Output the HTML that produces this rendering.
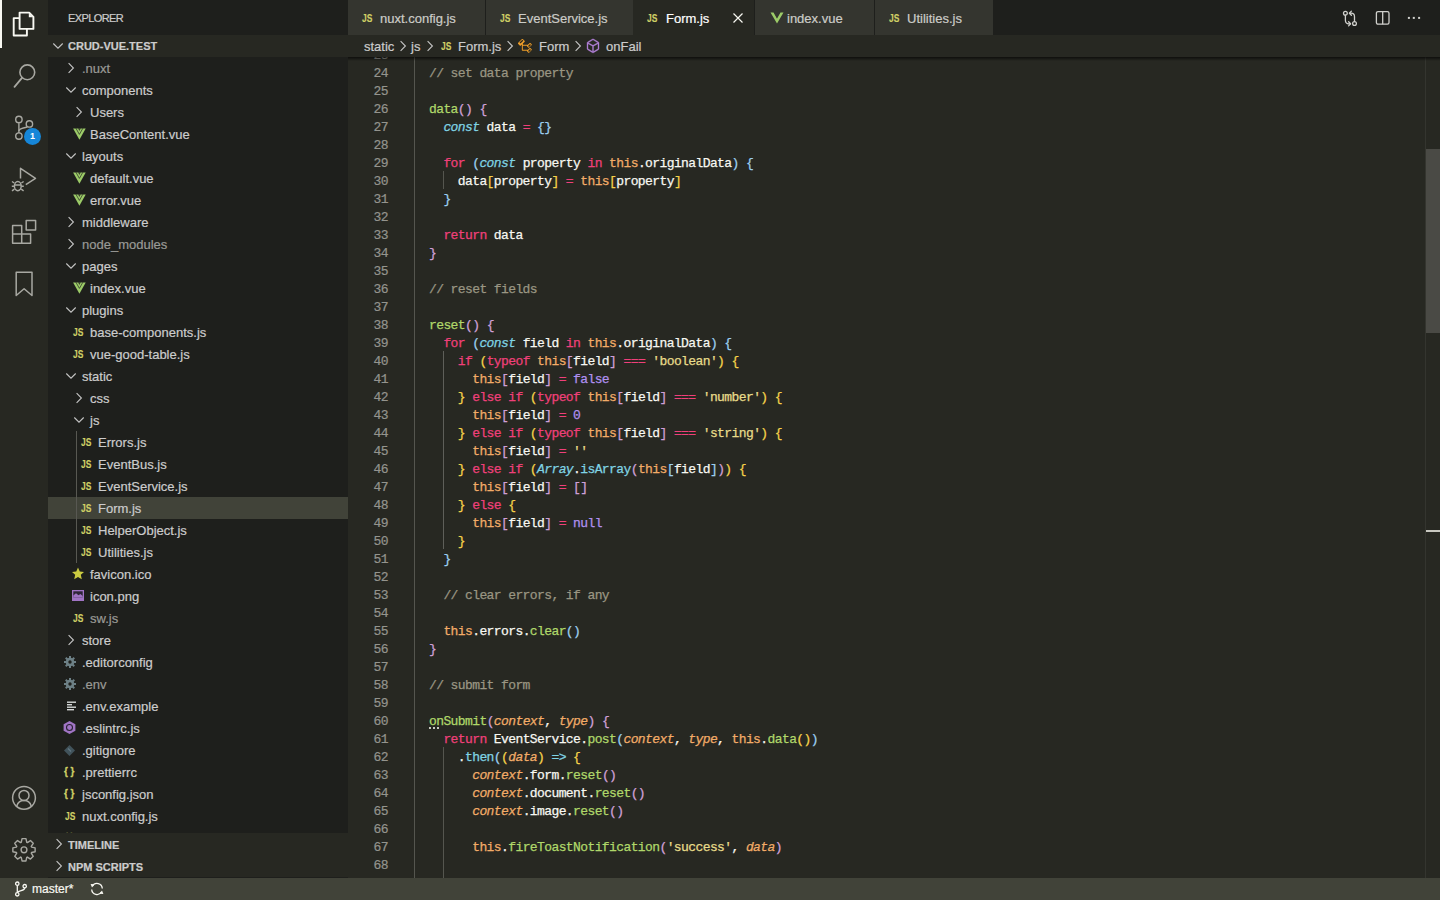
<!DOCTYPE html>
<html><head><meta charset="utf-8">
<style>
*{box-sizing:border-box}
html,body{margin:0;padding:0;width:1440px;height:900px;overflow:hidden;background:#272822;font-family:"Liberation Sans",sans-serif}
.abs{position:absolute}
#act{position:absolute;left:0;top:0;width:48px;height:878px;background:#272822}
#side{position:absolute;left:48px;top:0;width:300px;height:878px;background:#1e1f1c;overflow:hidden}
#tree{position:absolute;left:0;top:0;width:348px;height:833px;overflow:hidden}
.row{position:absolute;left:48px;width:300px;height:22px}
.row.sel{background:#414339}
.lbl{position:absolute;height:22px;line-height:22px;margin-top:1px;-webkit-text-stroke:0.2px currentColor;font-size:13px;color:#cccccc;white-space:nowrap}
.lbl.dim{color:#9a9a96}
.tw{position:absolute}
.ic{position:absolute}
.ij{position:absolute;width:14px;height:14px;font:bold 11px/14px "Liberation Sans",sans-serif;color:#cfcf66;transform:scaleX(0.77);-webkit-text-stroke:0.15px currentColor;transform-origin:0 0}
.ijs{position:absolute;width:14px;height:14px;font:bold 11px/14px "Liberation Sans",sans-serif;color:#cfcf66;letter-spacing:0px;transform:scaleX(0.9);transform-origin:0 0;-webkit-text-stroke:0.3px currentColor}
#tabs{position:absolute;left:348px;top:0;width:1092px;height:35px;background:#1e1f1c}
.tab{position:absolute;top:0;height:35px;background:#34352f}
.tab.act{background:#272822}
.tl{position:absolute;top:1px;line-height:35px;font-size:13px;color:#ccccc7;white-space:nowrap;-webkit-text-stroke:0.2px currentColor}
.tab.act .tl{color:#ffffff}
#crumbs{position:absolute;left:348px;top:35px;width:1092px;height:22px;background:#272822}
.cr{position:absolute;top:1px;line-height:22px;font-size:13px;color:#cccccc;white-space:nowrap;-webkit-text-stroke:0.2px currentColor}
#editor{position:absolute;left:348px;top:57px;width:1092px;height:821px;background:#272822;overflow:hidden}
.ln{position:absolute;left:0;width:40px;text-align:right;height:18px;margin-top:2px;font:13px/18px "Liberation Mono",monospace;letter-spacing:-0.6px;color:#94948e;-webkit-text-stroke:0.2px currentColor}
.cl{position:absolute;left:66.6px;height:18px;margin-top:2px;font:13px/18px "Liberation Mono",monospace;letter-spacing:-0.6px;white-space:pre;color:#f8f8f2;-webkit-text-stroke:0.25px currentColor}
.wh{color:#f8f8f2}.kw{color:#f0407a}.fn{color:#b0d86a}.cy{color:#80d4e4}.cyi{color:#80d4e4;font-style:italic}
.or{color:#f2ac68}.ori{color:#f2ac68;font-style:italic}.st{color:#e8dc8a}.pu{color:#b090f0}.cm{color:#9a9683}
.g{color:#f5d24a}.o{color:#d0a0d8}.b{color:#9ccff0}
#status{position:absolute;left:0;top:878px;width:1440px;height:22px;background:#414339}
.sh{position:absolute;left:48px;width:300px;height:22px;background:#272822}
.sht{position:absolute;left:20px;top:0;line-height:22px;font:bold 11px/22px "Liberation Sans",sans-serif;color:#cccccc}
</style></head><body>

<!-- activity bar -->
<div id="act">
  <div class="abs" style="left:0;top:0;width:2px;height:48px;background:#f8f8f2"></div>
  <!-- explorer -->
  <svg class="abs" style="left:12px;top:11px" width="24" height="26" viewBox="0 0 24 26">
    <g fill="none" stroke="#f8f8f2" stroke-width="1.9" stroke-linejoin="round">
      <path d="M7.6 1.6 H17.2 L21.4 5.8 V17.9 H7.6 Z"/>
      <path d="M7.6 7.1 H1.7 V24.5 H14.9 V17.9"/>
    </g>
    <path d="M16.8 2.2 L20.8 6.2 H16.8 Z" fill="#f8f8f2"/>
  </svg>
  <!-- search -->
  <svg class="abs" style="left:12px;top:62px" width="24" height="28" viewBox="0 0 24 28">
    <circle cx="15.3" cy="10.3" r="7.4" fill="none" stroke="#a8a8a2" stroke-width="1.6"/>
    <path d="M10 15.8 L2.5 24.8" stroke="#a8a8a2" stroke-width="1.8" stroke-linecap="round"/>
  </svg>
  <!-- scm -->
  <svg class="abs" style="left:12px;top:108px" width="26" height="34" viewBox="0 0 26 34">
    <g fill="none" stroke="#a8a8a2" stroke-width="1.4">
      <circle cx="6.9" cy="11.4" r="3.2"/><circle cx="17.4" cy="15.9" r="3.2"/><circle cx="6.9" cy="28.1" r="3.2"/>
      <path d="M6.9 14.6 V24.9"/><path d="M6.9 23 C7 20 11 20.5 15 19"/>
    </g>
  </svg>
  <div class="abs" style="left:24px;top:128px;width:17px;height:17px;border-radius:50%;background:#1686d8;color:#fff;font:bold 9px/17px 'Liberation Sans',sans-serif;text-align:center">1</div>
  <!-- debug -->
  <svg class="abs" style="left:10px;top:164px" width="28" height="28" viewBox="0 0 28 28">
    <g fill="none" stroke="#a8a8a2" stroke-width="1.5" stroke-linejoin="round">
      <path d="M10.5 14.5 V4.3 L25.5 14.3 L15.8 20.6"/>
      <ellipse cx="7.8" cy="22.1" rx="3.4" ry="4.6"/>
      <path d="M4.2 19 L2 17.5 M11.4 19 L13.6 17.5 M4.2 22.3 H1.8 M11.4 22.3 H13.8 M4.4 25.2 L2 26.8 M11.2 25.2 L13.6 26.8 M4.6 21 H11"/>
    </g>
  </svg>
  <!-- extensions -->
  <svg class="abs" style="left:10px;top:218px" width="28" height="28" viewBox="0 0 28 28">
    <g fill="none" stroke="#a8a8a2" stroke-width="1.5" stroke-linejoin="round">
      <path d="M2.6 7.5 H11.7 V16 H20.6 V25.3 H2.6 Z M2.6 16 H11.7 V25.3"/>
      <rect x="16.2" y="2.5" width="9.4" height="9.4"/>
    </g>
  </svg>
  <!-- bookmarks -->
  <svg class="abs" style="left:14px;top:270px" width="20" height="28" viewBox="0 0 20 28">
    <path d="M2.2 2.3 H18 V25.5 L10.1 18.8 L2.2 25.5 Z" fill="none" stroke="#a8a8a2" stroke-width="1.5" stroke-linejoin="round"/>
  </svg>
  <!-- account -->
  <svg class="abs" style="left:10px;top:784px" width="28" height="28" viewBox="0 0 28 28">
    <g fill="none" stroke="#a8a8a2" stroke-width="1.5">
      <circle cx="14" cy="13.8" r="11.4"/>
      <circle cx="14" cy="11.4" r="5"/>
      <path d="M6.8 22 A7.5 7.5 0 0 1 21.2 22"/>
    </g>
  </svg>
  <!-- gear -->
  <svg class="abs" style="left:10px;top:836px" width="28" height="28" viewBox="0 0 28 28">
    <g fill="none" stroke="#a8a8a2" stroke-width="1.4" stroke-linejoin="round">
      <path d="M11.26 6.48 L12.04 2.87 L15.96 2.87 L16.74 6.48 L17.38 6.75 L20.48 4.74 L23.26 7.52 L21.25 10.62 L21.52 11.26 L25.13 12.04 L25.13 15.96 L21.52 16.74 L21.25 17.38 L23.26 20.48 L20.48 23.26 L17.38 21.25 L16.74 21.52 L15.96 25.13 L12.04 25.13 L11.26 21.52 L10.62 21.25 L7.52 23.26 L4.74 20.48 L6.75 17.38 L6.48 16.74 L2.87 15.96 L2.87 12.04 L6.48 11.26 L6.75 10.62 L4.74 7.52 L7.52 4.74 L10.62 6.75 Z" transform="translate(0 -0.2)"/>
      <circle cx="14" cy="13.8" r="2.9"/>
    </g>
  </svg>
</div>

<!-- sidebar -->
<div id="side"></div>
<div class="abs" style="left:68px;top:1px;line-height:35px;font-size:11px;color:#cccccc;letter-spacing:-0.6px;-webkit-text-stroke:0.2px currentColor">EXPLORER</div>
<div class="sh" style="top:35px"></div>
<svg class="abs" style="left:50px;top:38px" width="16" height="16" viewBox="0 0 16 16"><path d="M3.3 5.5 L8 10.2 L12.7 5.5" fill="none" stroke="#c5c5c5" stroke-width="1.1"/></svg>
<div class="abs" style="left:68px;top:35px;font:bold 11px/22px 'Liberation Sans',sans-serif;color:#cccccc;-webkit-text-stroke:0.2px currentColor">CRUD-VUE.TEST</div>
<div id="tree">
<div class="row" style="top:57px"></div>
<svg class="tw" style="left:63px;top:60px" width="16" height="16" viewBox="0 0 16 16"><path d="M5.6 3.2 L10.4 8 L5.6 12.8" fill="none" stroke="#c5c5c5" stroke-width="1.1"/></svg>
<div class="lbl dim" style="left:82px;top:57px">.nuxt</div>
<div class="row" style="top:79px"></div>
<svg class="tw" style="left:63px;top:82px" width="16" height="16" viewBox="0 0 16 16"><path d="M3.3 5.5 L8 10.2 L12.7 5.5" fill="none" stroke="#c5c5c5" stroke-width="1.1"/></svg>
<div class="lbl" style="left:82px;top:79px">components</div>
<div class="row" style="top:101px"></div>
<svg class="tw" style="left:71px;top:104px" width="16" height="16" viewBox="0 0 16 16"><path d="M5.6 3.2 L10.4 8 L5.6 12.8" fill="none" stroke="#c5c5c5" stroke-width="1.1"/></svg>
<div class="lbl" style="left:90px;top:101px">Users</div>
<div class="row" style="top:123px"></div>
<svg class="ic" style="left:73px;top:128px" width="14" height="13" viewBox="0 0 14 13"><path d="M0.1 0.4 H12.7 L6.4 11.7 Z" fill="#9ccb68"/><path d="M2.9 0.2 L6.4 6.4 L9.9 0.2" fill="none" stroke="#1e1f1c" stroke-width="0.9" opacity="0.75"/><path d="M5.0 0.3 H7.8 L6.4 2.9 Z" fill="#1e1f1c" opacity="0.8"/></svg>
<div class="lbl" style="left:90px;top:123px">BaseContent.vue</div>
<div class="row" style="top:145px"></div>
<svg class="tw" style="left:63px;top:148px" width="16" height="16" viewBox="0 0 16 16"><path d="M3.3 5.5 L8 10.2 L12.7 5.5" fill="none" stroke="#c5c5c5" stroke-width="1.1"/></svg>
<div class="lbl" style="left:82px;top:145px">layouts</div>
<div class="row" style="top:167px"></div>
<svg class="ic" style="left:73px;top:172px" width="14" height="13" viewBox="0 0 14 13"><path d="M0.1 0.4 H12.7 L6.4 11.7 Z" fill="#9ccb68"/><path d="M2.9 0.2 L6.4 6.4 L9.9 0.2" fill="none" stroke="#1e1f1c" stroke-width="0.9" opacity="0.75"/><path d="M5.0 0.3 H7.8 L6.4 2.9 Z" fill="#1e1f1c" opacity="0.8"/></svg>
<div class="lbl" style="left:90px;top:167px">default.vue</div>
<div class="row" style="top:189px"></div>
<svg class="ic" style="left:73px;top:194px" width="14" height="13" viewBox="0 0 14 13"><path d="M0.1 0.4 H12.7 L6.4 11.7 Z" fill="#9ccb68"/><path d="M2.9 0.2 L6.4 6.4 L9.9 0.2" fill="none" stroke="#1e1f1c" stroke-width="0.9" opacity="0.75"/><path d="M5.0 0.3 H7.8 L6.4 2.9 Z" fill="#1e1f1c" opacity="0.8"/></svg>
<div class="lbl" style="left:90px;top:189px">error.vue</div>
<div class="row" style="top:211px"></div>
<svg class="tw" style="left:63px;top:214px" width="16" height="16" viewBox="0 0 16 16"><path d="M5.6 3.2 L10.4 8 L5.6 12.8" fill="none" stroke="#c5c5c5" stroke-width="1.1"/></svg>
<div class="lbl" style="left:82px;top:211px">middleware</div>
<div class="row" style="top:233px"></div>
<svg class="tw" style="left:63px;top:236px" width="16" height="16" viewBox="0 0 16 16"><path d="M5.6 3.2 L10.4 8 L5.6 12.8" fill="none" stroke="#c5c5c5" stroke-width="1.1"/></svg>
<div class="lbl dim" style="left:82px;top:233px">node_modules</div>
<div class="row" style="top:255px"></div>
<svg class="tw" style="left:63px;top:258px" width="16" height="16" viewBox="0 0 16 16"><path d="M3.3 5.5 L8 10.2 L12.7 5.5" fill="none" stroke="#c5c5c5" stroke-width="1.1"/></svg>
<div class="lbl" style="left:82px;top:255px">pages</div>
<div class="row" style="top:277px"></div>
<svg class="ic" style="left:73px;top:282px" width="14" height="13" viewBox="0 0 14 13"><path d="M0.1 0.4 H12.7 L6.4 11.7 Z" fill="#9ccb68"/><path d="M2.9 0.2 L6.4 6.4 L9.9 0.2" fill="none" stroke="#1e1f1c" stroke-width="0.9" opacity="0.75"/><path d="M5.0 0.3 H7.8 L6.4 2.9 Z" fill="#1e1f1c" opacity="0.8"/></svg>
<div class="lbl" style="left:90px;top:277px">index.vue</div>
<div class="row" style="top:299px"></div>
<svg class="tw" style="left:63px;top:302px" width="16" height="16" viewBox="0 0 16 16"><path d="M3.3 5.5 L8 10.2 L12.7 5.5" fill="none" stroke="#c5c5c5" stroke-width="1.1"/></svg>
<div class="lbl" style="left:82px;top:299px">plugins</div>
<div class="row" style="top:321px"></div>
<div class="ij" style="left:72.5px;top:325px">JS</div>
<div class="lbl" style="left:90px;top:321px">base-components.js</div>
<div class="row" style="top:343px"></div>
<div class="ij" style="left:72.5px;top:347px">JS</div>
<div class="lbl" style="left:90px;top:343px">vue-good-table.js</div>
<div class="row" style="top:365px"></div>
<svg class="tw" style="left:63px;top:368px" width="16" height="16" viewBox="0 0 16 16"><path d="M3.3 5.5 L8 10.2 L12.7 5.5" fill="none" stroke="#c5c5c5" stroke-width="1.1"/></svg>
<div class="lbl" style="left:82px;top:365px">static</div>
<div class="row" style="top:387px"></div>
<svg class="tw" style="left:71px;top:390px" width="16" height="16" viewBox="0 0 16 16"><path d="M5.6 3.2 L10.4 8 L5.6 12.8" fill="none" stroke="#c5c5c5" stroke-width="1.1"/></svg>
<div class="lbl" style="left:90px;top:387px">css</div>
<div class="row" style="top:409px"></div>
<svg class="tw" style="left:71px;top:412px" width="16" height="16" viewBox="0 0 16 16"><path d="M3.3 5.5 L8 10.2 L12.7 5.5" fill="none" stroke="#c5c5c5" stroke-width="1.1"/></svg>
<div class="lbl" style="left:90px;top:409px">js</div>
<div class="row" style="top:431px"></div>
<div class="ij" style="left:80.5px;top:435px">JS</div>
<div class="lbl" style="left:98px;top:431px">Errors.js</div>
<div class="row" style="top:453px"></div>
<div class="ij" style="left:80.5px;top:457px">JS</div>
<div class="lbl" style="left:98px;top:453px">EventBus.js</div>
<div class="row" style="top:475px"></div>
<div class="ij" style="left:80.5px;top:479px">JS</div>
<div class="lbl" style="left:98px;top:475px">EventService.js</div>
<div class="row sel" style="top:497px"></div>
<div class="ij" style="left:80.5px;top:501px">JS</div>
<div class="lbl" style="left:98px;top:497px">Form.js</div>
<div class="row" style="top:519px"></div>
<div class="ij" style="left:80.5px;top:523px">JS</div>
<div class="lbl" style="left:98px;top:519px">HelperObject.js</div>
<div class="row" style="top:541px"></div>
<div class="ij" style="left:80.5px;top:545px">JS</div>
<div class="lbl" style="left:98px;top:541px">Utilities.js</div>
<div class="row" style="top:563px"></div>
<svg class="ic" style="left:71px;top:567px" width="14" height="14" viewBox="0 0 14 14"><path d="M7 0.6 L8.75 4.6 L13 4.95 L9.8 7.8 L10.8 12.2 L7 9.9 L3.2 12.2 L4.2 7.8 L1 4.95 L5.25 4.6 Z" fill="#cbcb41"/></svg>
<div class="lbl" style="left:90px;top:563px">favicon.ico</div>
<div class="row" style="top:585px"></div>
<svg class="ic" style="left:72px;top:590px" width="14" height="14" viewBox="0 0 14 14"><rect x="0" y="0" width="12" height="11" fill="#a074c4"/><rect x="1.3" y="1.3" width="9.4" height="6" fill="#2e2638"/><path d="M1.3 7.3 L1.3 5.5 L4 3.2 L6.5 5.3 L8.4 4 L10.7 6 V7.3 Z" fill="#a074c4"/></svg>
<div class="lbl" style="left:90px;top:585px">icon.png</div>
<div class="row" style="top:607px"></div>
<div class="ij" style="left:72.5px;top:611px">JS</div>
<div class="lbl dim" style="left:90px;top:607px">sw.js</div>
<div class="row" style="top:629px"></div>
<svg class="tw" style="left:63px;top:632px" width="16" height="16" viewBox="0 0 16 16"><path d="M5.6 3.2 L10.4 8 L5.6 12.8" fill="none" stroke="#c5c5c5" stroke-width="1.1"/></svg>
<div class="lbl" style="left:82px;top:629px">store</div>
<div class="row" style="top:651px"></div>
<svg class="ic" style="left:64px;top:656px" width="14" height="14" viewBox="0 0 14 14"><g fill="#6d8086"><circle cx="6" cy="6" r="4.3"/><rect x="5" y="0" width="2" height="12"/><rect x="0" y="5" width="12" height="2"/><rect x="5" y="0" width="2" height="12" transform="rotate(45 6 6)"/><rect x="5" y="0" width="2" height="12" transform="rotate(-45 6 6)"/></g><circle cx="6" cy="6" r="1.7" fill="#1e1f1c"/></svg>
<div class="lbl" style="left:82px;top:651px">.editorconfig</div>
<div class="row" style="top:673px"></div>
<svg class="ic" style="left:64px;top:678px" width="14" height="14" viewBox="0 0 14 14"><g fill="#6d8086"><circle cx="6" cy="6" r="4.3"/><rect x="5" y="0" width="2" height="12"/><rect x="0" y="5" width="12" height="2"/><rect x="5" y="0" width="2" height="12" transform="rotate(45 6 6)"/><rect x="5" y="0" width="2" height="12" transform="rotate(-45 6 6)"/></g><circle cx="6" cy="6" r="1.7" fill="#1e1f1c"/></svg>
<div class="lbl dim" style="left:82px;top:673px">.env</div>
<div class="row" style="top:695px"></div>
<svg class="ic" style="left:64px;top:701px" width="14" height="14" viewBox="0 0 14 14"><g fill="#d4d7d6"><rect x="3" y="0.5" width="9" height="1.4"/><rect x="3" y="3" width="5" height="1.4"/><rect x="3" y="5.5" width="9" height="1.4"/><rect x="3" y="8" width="7" height="1.4"/></g></svg>
<div class="lbl" style="left:82px;top:695px">.env.example</div>
<div class="row" style="top:717px"></div>
<svg class="ic" style="left:63px;top:721px" width="14" height="14" viewBox="0 0 14 14"><path d="M6.5 0 L12.4 3.2 V9.8 L6.5 13 L0.6 9.8 V3.2 Z" fill="#a074c4"/><circle cx="6.5" cy="6.5" r="3" fill="none" stroke="#2a2034" stroke-width="1.1"/></svg>
<div class="lbl" style="left:82px;top:717px">.eslintrc.js</div>
<div class="row" style="top:739px"></div>
<svg class="ic" style="left:64px;top:745px" width="14" height="14" viewBox="0 0 14 14"><path d="M5.5 0 L11 5.5 L5.5 11 L0 5.5 Z" fill="#41535b"/><path d="M4 3.5 L7 6.5" stroke="#5f7781" stroke-width="1.2"/></svg>
<div class="lbl" style="left:82px;top:739px">.gitignore</div>
<div class="row" style="top:761px"></div>
<div class="ijs" style="left:64px;top:764px">{ }</div>
<div class="lbl" style="left:82px;top:761px">.prettierrc</div>
<div class="row" style="top:783px"></div>
<div class="ijs" style="left:64px;top:786px">{ }</div>
<div class="lbl" style="left:82px;top:783px">jsconfig.json</div>
<div class="row" style="top:805px"></div>
<div class="ij" style="left:64.5px;top:809px">JS</div>
<div class="lbl" style="left:82px;top:805px">nuxt.config.js</div>
<div class="row" style="top:827px"></div>
<div class="ijs" style="left:64px;top:830px">{ }</div>
<div class="lbl" style="left:82px;top:827px">package.json</div>
<div class="abs" style="left:76px;top:431px;width:1px;height:132px;background:#585852"></div>
</div>
<div class="sh" style="top:833px"></div>
<svg class="abs" style="left:51px;top:836px" width="16" height="16" viewBox="0 0 16 16"><path d="M5.6 3.2 L10.4 8 L5.6 12.8" fill="none" stroke="#c5c5c5" stroke-width="1.1"/></svg>
<div class="abs" style="left:68px;top:834px;font:bold 11px/22px 'Liberation Sans',sans-serif;color:#cccccc;-webkit-text-stroke:0.2px currentColor">TIMELINE</div>
<div class="sh" style="top:855px"></div>
<svg class="abs" style="left:51px;top:858px" width="16" height="16" viewBox="0 0 16 16"><path d="M5.6 3.2 L10.4 8 L5.6 12.8" fill="none" stroke="#c5c5c5" stroke-width="1.1"/></svg>
<div class="abs" style="left:68px;top:856px;font:bold 11px/22px 'Liberation Sans',sans-serif;color:#cccccc;-webkit-text-stroke:0.2px currentColor">NPM SCRIPTS</div>

<!-- tabs -->
<div id="tabs">
  <div class="tab" style="left:0;width:137px">
    <div class="ij" style="left:14px;top:11px">JS</div>
    <div class="tl" style="left:32px">nuxt.config.js</div>
  </div>
  <div class="tab" style="left:138px;width:147px">
    <div class="ij" style="left:152px;top:11px;margin-left:-138px">JS</div>
    <div class="tl" style="left:32px">EventService.js</div>
  </div>
  <div class="tab act" style="left:285px;width:121px">
    <div class="ij" style="left:14px;top:11px">JS</div>
    <div class="tl" style="left:33px">Form.js</div>
    <svg class="abs" style="left:99px;top:12px" width="12" height="12" viewBox="0 0 12 12"><path d="M1.5 1.5 L10.5 10.5 M10.5 1.5 L1.5 10.5" stroke="#f8f8f2" stroke-width="1.2"/></svg>
  </div>
  <div class="tab" style="left:407px;width:119px">
    <svg class="abs" style="left:15px;top:11px" width="14" height="14" viewBox="0 0 14 14"><path d="M0.5 1.5 H3.6 L7 7.4 L10.4 1.5 H13.5 L7 12.6 Z" fill="#9ccb68"/><path d="M3.6 1.5 H5.4 L7 4.3 L8.6 1.5 H10.4 L7 7.4 Z" fill="#34352f" opacity="0.55"/></svg>
    <div class="tl" style="left:32px">index.vue</div>
  </div>
  <div class="tab" style="left:527px;width:118px">
    <div class="ij" style="left:14px;top:11px">JS</div>
    <div class="tl" style="left:32px">Utilities.js</div>
  </div>
  <!-- right actions -->
  <svg class="abs" style="left:992px;top:8px" width="20" height="20" viewBox="0 0 20 20">
    <g fill="none" stroke="#d0d0cc" stroke-width="1.3" stroke-linecap="round" stroke-linejoin="round">
      <circle cx="5.4" cy="5.2" r="1.9"/><circle cx="14.5" cy="15.5" r="1.9"/>
      <path d="M5.4 7.1 V12.3 Q5.4 15.8 8.9 15.8 H10.3"/><path d="M8.6 13.7 L10.6 15.8 L8.6 17.9"/>
      <path d="M14.5 13.6 V8.7 Q14.5 5.2 11 5.2 H9.6"/><path d="M11.4 3.1 L9.4 5.2 L11.4 7.3"/>
    </g>
  </svg>
  <svg class="abs" style="left:1024px;top:8px" width="20" height="20" viewBox="0 0 20 20">
    <g fill="none" stroke="#d0d0cc" stroke-width="1.3"><rect x="4.4" y="3.6" width="12.6" height="12.6" rx="1.6"/><path d="M10.7 3.6 V16.2"/></g>
  </svg>
  <svg class="abs" style="left:1056px;top:8px" width="20" height="20" viewBox="0 0 20 20">
    <g fill="#d0d0cc"><rect x="3.9" y="8.9" width="2" height="2"/><rect x="8.8" y="8.9" width="2" height="2"/><rect x="14.1" y="8.9" width="2" height="2"/></g>
  </svg>
</div>

<!-- breadcrumbs -->
<div id="crumbs">
  <div class="cr" style="left:16px">static</div>
  <svg class="abs" style="left:47px;top:3px" width="16" height="16" viewBox="0 0 16 16"><path d="M5.6 3.2 L10.4 8 L5.6 12.8" fill="none" stroke="#c5c5c5" stroke-width="1.1"/></svg>
  <div class="cr" style="left:63px">js</div>
  <svg class="abs" style="left:74px;top:3px" width="16" height="16" viewBox="0 0 16 16"><path d="M5.6 3.2 L10.4 8 L5.6 12.8" fill="none" stroke="#c5c5c5" stroke-width="1.1"/></svg>
  <div class="ij" style="left:93px;top:4px">JS</div>
  <div class="cr" style="left:110px">Form.js</div>
  <svg class="abs" style="left:154px;top:3px" width="16" height="16" viewBox="0 0 16 16"><path d="M5.6 3.2 L10.4 8 L5.6 12.8" fill="none" stroke="#c5c5c5" stroke-width="1.1"/></svg>
  <svg class="abs" style="left:169px;top:3px" width="16" height="16" viewBox="0 0 16 16"><path fill="#ee9d28" d="M11.34 9.71h.71l2.67-2.67v-.71L13.38 5h-.7l-1.82 1.81h-5V5.56l1.86-1.85V3l-2-2H5L1 5v.71l2 2h.71l1.14-1.15v5.79l.5.5H10v.52l1.33 1.34h.71l2.67-2.67v-.71L13.37 10h-.7l-1.86 1.85h-5v-4H10v.48l1.34 1.38zm1.69-3.65l.97.97-1.960 1.96-.97-.97 1.96-1.96zm0 5l.97.97-1.96 1.96-.97-.97 1.96-1.96zM5.35 1.76l.97.97-2.82 2.82-.97-.97 2.82-2.82z"/></svg>
  <div class="cr" style="left:191px">Form</div>
  <svg class="abs" style="left:222px;top:3px" width="16" height="16" viewBox="0 0 16 16"><path d="M5.6 3.2 L10.4 8 L5.6 12.8" fill="none" stroke="#c5c5c5" stroke-width="1.1"/></svg>
  <svg class="abs" style="left:237px;top:3px" width="16" height="16" viewBox="0 0 16 16"><path fill="#b180d7" stroke="#b180d7" stroke-width="0.35" d="M13.51 4l-5-3h-1l-5 3-.49.86v6l.49.85 5 3h1l5-3 .49-.85v-6L13.51 4zm-6 9.56l-4.5-2.7V5.7l4.5 2.45v5.41zM3.27 4.7l4.74-2.84 4.74 2.84-4.74 2.59L3.27 4.7zm9.74 6.160l-4.5 2.7V8.15l4.5-2.45v5.16z"/></svg>
  <div class="cr" style="left:258px">onFail</div>
</div>

<!-- editor -->
<div id="editor">
  <div class="abs" style="left:66px;top:0;width:1px;height:821px;background:#55564f"></div>
  <div class="abs" style="left:95px;top:114px;width:1px;height:18px;background:#55564f"></div>
  <div class="abs" style="left:95px;top:294px;width:1px;height:198px;background:#5e5f59"></div>
  <div class="abs" style="left:95px;top:690px;width:1px;height:131px;background:#55564f"></div>
  <div class="ln" style="top:-12px">23</div><div class="cl" style="top:-12px"></div>
<div class="ln" style="top:6px">24</div><div class="cl" style="top:6px"><span class="cm">  // set data property</span></div>
<div class="ln" style="top:24px">25</div><div class="cl" style="top:24px"></div>
<div class="ln" style="top:42px">26</div><div class="cl" style="top:42px"><span class="wh">  </span><span class="fn">data</span><span class="o">()</span><span class="wh"> </span><span class="o">{</span></div>
<div class="ln" style="top:60px">27</div><div class="cl" style="top:60px"><span class="wh">    </span><span class="cyi">const</span><span class="wh"> data </span><span class="kw">=</span><span class="wh"> </span><span class="b">{}</span></div>
<div class="ln" style="top:78px">28</div><div class="cl" style="top:78px"></div>
<div class="ln" style="top:96px">29</div><div class="cl" style="top:96px"><span class="wh">    </span><span class="kw">for</span><span class="wh"> </span><span class="b">(</span><span class="cyi">const</span><span class="wh"> property </span><span class="kw">in</span><span class="wh"> </span><span class="or">this</span><span class="wh">.originalData</span><span class="b">)</span><span class="wh"> </span><span class="b">{</span></div>
<div class="ln" style="top:114px">30</div><div class="cl" style="top:114px"><span class="wh">      data</span><span class="g">[</span><span class="wh">property</span><span class="g">]</span><span class="wh"> </span><span class="kw">=</span><span class="wh"> </span><span class="or">this</span><span class="g">[</span><span class="wh">property</span><span class="g">]</span></div>
<div class="ln" style="top:132px">31</div><div class="cl" style="top:132px"><span class="wh">    </span><span class="b">}</span></div>
<div class="ln" style="top:150px">32</div><div class="cl" style="top:150px"></div>
<div class="ln" style="top:168px">33</div><div class="cl" style="top:168px"><span class="wh">    </span><span class="kw">return</span><span class="wh"> data</span></div>
<div class="ln" style="top:186px">34</div><div class="cl" style="top:186px"><span class="wh">  </span><span class="o">}</span></div>
<div class="ln" style="top:204px">35</div><div class="cl" style="top:204px"></div>
<div class="ln" style="top:222px">36</div><div class="cl" style="top:222px"><span class="cm">  // reset fields</span></div>
<div class="ln" style="top:240px">37</div><div class="cl" style="top:240px"></div>
<div class="ln" style="top:258px">38</div><div class="cl" style="top:258px"><span class="wh">  </span><span class="fn">reset</span><span class="o">()</span><span class="wh"> </span><span class="o">{</span></div>
<div class="ln" style="top:276px">39</div><div class="cl" style="top:276px"><span class="wh">    </span><span class="kw">for</span><span class="wh"> </span><span class="b">(</span><span class="cyi">const</span><span class="wh"> field </span><span class="kw">in</span><span class="wh"> </span><span class="or">this</span><span class="wh">.originalData</span><span class="b">)</span><span class="wh"> </span><span class="b">{</span></div>
<div class="ln" style="top:294px">40</div><div class="cl" style="top:294px"><span class="wh">      </span><span class="kw">if</span><span class="wh"> </span><span class="g">(</span><span class="kw">typeof</span><span class="wh"> </span><span class="or">this</span><span class="o">[</span><span class="wh">field</span><span class="o">]</span><span class="wh"> </span><span class="kw">===</span><span class="wh"> </span><span class="st">'boolean'</span><span class="g">)</span><span class="wh"> </span><span class="g">{</span></div>
<div class="ln" style="top:312px">41</div><div class="cl" style="top:312px"><span class="wh">        </span><span class="or">this</span><span class="o">[</span><span class="wh">field</span><span class="o">]</span><span class="wh"> </span><span class="kw">=</span><span class="wh"> </span><span class="pu">false</span></div>
<div class="ln" style="top:330px">42</div><div class="cl" style="top:330px"><span class="wh">      </span><span class="g">}</span><span class="wh"> </span><span class="kw">else</span><span class="wh"> </span><span class="kw">if</span><span class="wh"> </span><span class="g">(</span><span class="kw">typeof</span><span class="wh"> </span><span class="or">this</span><span class="o">[</span><span class="wh">field</span><span class="o">]</span><span class="wh"> </span><span class="kw">===</span><span class="wh"> </span><span class="st">'number'</span><span class="g">)</span><span class="wh"> </span><span class="g">{</span></div>
<div class="ln" style="top:348px">43</div><div class="cl" style="top:348px"><span class="wh">        </span><span class="or">this</span><span class="o">[</span><span class="wh">field</span><span class="o">]</span><span class="wh"> </span><span class="kw">=</span><span class="wh"> </span><span class="pu">0</span></div>
<div class="ln" style="top:366px">44</div><div class="cl" style="top:366px"><span class="wh">      </span><span class="g">}</span><span class="wh"> </span><span class="kw">else</span><span class="wh"> </span><span class="kw">if</span><span class="wh"> </span><span class="g">(</span><span class="kw">typeof</span><span class="wh"> </span><span class="or">this</span><span class="o">[</span><span class="wh">field</span><span class="o">]</span><span class="wh"> </span><span class="kw">===</span><span class="wh"> </span><span class="st">'string'</span><span class="g">)</span><span class="wh"> </span><span class="g">{</span></div>
<div class="ln" style="top:384px">45</div><div class="cl" style="top:384px"><span class="wh">        </span><span class="or">this</span><span class="o">[</span><span class="wh">field</span><span class="o">]</span><span class="wh"> </span><span class="kw">=</span><span class="wh"> </span><span class="st">''</span></div>
<div class="ln" style="top:402px">46</div><div class="cl" style="top:402px"><span class="wh">      </span><span class="g">}</span><span class="wh"> </span><span class="kw">else</span><span class="wh"> </span><span class="kw">if</span><span class="wh"> </span><span class="g">(</span><span class="cyi">Array</span><span class="wh">.</span><span class="cy">isArray</span><span class="o">(</span><span class="or">this</span><span class="b">[</span><span class="wh">field</span><span class="b">]</span><span class="o">)</span><span class="g">)</span><span class="wh"> </span><span class="g">{</span></div>
<div class="ln" style="top:420px">47</div><div class="cl" style="top:420px"><span class="wh">        </span><span class="or">this</span><span class="o">[</span><span class="wh">field</span><span class="o">]</span><span class="wh"> </span><span class="kw">=</span><span class="wh"> </span><span class="o">[]</span></div>
<div class="ln" style="top:438px">48</div><div class="cl" style="top:438px"><span class="wh">      </span><span class="g">}</span><span class="wh"> </span><span class="kw">else</span><span class="wh"> </span><span class="g">{</span></div>
<div class="ln" style="top:456px">49</div><div class="cl" style="top:456px"><span class="wh">        </span><span class="or">this</span><span class="o">[</span><span class="wh">field</span><span class="o">]</span><span class="wh"> </span><span class="kw">=</span><span class="wh"> </span><span class="pu">null</span></div>
<div class="ln" style="top:474px">50</div><div class="cl" style="top:474px"><span class="wh">      </span><span class="g">}</span></div>
<div class="ln" style="top:492px">51</div><div class="cl" style="top:492px"><span class="wh">    </span><span class="b">}</span></div>
<div class="ln" style="top:510px">52</div><div class="cl" style="top:510px"></div>
<div class="ln" style="top:528px">53</div><div class="cl" style="top:528px"><span class="cm">    // clear errors, if any</span></div>
<div class="ln" style="top:546px">54</div><div class="cl" style="top:546px"></div>
<div class="ln" style="top:564px">55</div><div class="cl" style="top:564px"><span class="wh">    </span><span class="or">this</span><span class="wh">.errors.</span><span class="fn">clear</span><span class="b">()</span></div>
<div class="ln" style="top:582px">56</div><div class="cl" style="top:582px"><span class="wh">  </span><span class="o">}</span></div>
<div class="ln" style="top:600px">57</div><div class="cl" style="top:600px"></div>
<div class="ln" style="top:618px">58</div><div class="cl" style="top:618px"><span class="cm">  // submit form</span></div>
<div class="ln" style="top:636px">59</div><div class="cl" style="top:636px"></div>
<div class="ln" style="top:654px">60</div><div class="cl" style="top:654px"><span class="wh">  </span><span class="fn">onSubmit</span><span class="o">(</span><span class="ori">context</span><span class="wh">, </span><span class="ori">type</span><span class="o">)</span><span class="wh"> </span><span class="o">{</span></div>
<div class="ln" style="top:672px">61</div><div class="cl" style="top:672px"><span class="wh">    </span><span class="kw">return</span><span class="wh"> EventService.</span><span class="fn">post</span><span class="b">(</span><span class="ori">context</span><span class="wh">, </span><span class="ori">type</span><span class="wh">, </span><span class="or">this</span><span class="wh">.</span><span class="fn">data</span><span class="g">()</span><span class="b">)</span></div>
<div class="ln" style="top:690px">62</div><div class="cl" style="top:690px"><span class="wh">      .</span><span class="cy">then</span><span class="b">(</span><span class="g">(</span><span class="ori">data</span><span class="g">)</span><span class="wh"> </span><span class="cy">=&gt;</span><span class="wh"> </span><span class="g">{</span></div>
<div class="ln" style="top:708px">63</div><div class="cl" style="top:708px"><span class="wh">        </span><span class="ori">context</span><span class="wh">.form.</span><span class="fn">reset</span><span class="o">()</span></div>
<div class="ln" style="top:726px">64</div><div class="cl" style="top:726px"><span class="wh">        </span><span class="ori">context</span><span class="wh">.document.</span><span class="fn">reset</span><span class="o">()</span></div>
<div class="ln" style="top:744px">65</div><div class="cl" style="top:744px"><span class="wh">        </span><span class="ori">context</span><span class="wh">.image.</span><span class="fn">reset</span><span class="o">()</span></div>
<div class="ln" style="top:762px">66</div><div class="cl" style="top:762px"></div>
<div class="ln" style="top:780px">67</div><div class="cl" style="top:780px"><span class="wh">        </span><span class="or">this</span><span class="wh">.</span><span class="fn">fireToastNotification</span><span class="o">(</span><span class="st">'success'</span><span class="wh">, </span><span class="ori">data</span><span class="o">)</span></div>
<div class="ln" style="top:798px">68</div><div class="cl" style="top:798px"></div>
<div class="ln" style="top:816px">69</div><div class="cl" style="top:816px"><span class="wh">        </span><span class="or">this</span><span class="wh">.</span><span class="fn">$emit</span><span class="o">(</span><span class="st">'submitted'</span><span class="o">)</span></div>
  <!-- hint dots under "on" -->
  <div class="abs" style="left:81px;top:670px;width:12px;height:2px;background:repeating-linear-gradient(90deg,#c8c8c0 0 2px,transparent 2px 4px)"></div>
  <!-- scrollbar -->
  <div class="abs" style="left:1077px;top:0;width:1px;height:821px;background:#34352f"></div>
  <div class="abs" style="left:1078px;top:92px;width:14px;height:184px;background:#4a4a45"></div>
  <div class="abs" style="left:1078px;top:473px;width:14px;height:2px;background:#c8c8c0"></div>
  <!-- scroll shadow -->
  <div class="abs" style="left:0;top:0;width:1092px;height:4px;background:linear-gradient(#000000a0,transparent)"></div>
</div>

<!-- status bar -->
<div id="status">
  <svg class="abs" style="left:14px;top:3px" width="14" height="16" viewBox="0 0 14 16">
    <g fill="none" stroke="#f8f8f2" stroke-width="1.3">
      <circle cx="3.3" cy="2.7" r="1.7"/><circle cx="3.3" cy="13.3" r="1.7"/><circle cx="10.7" cy="5.2" r="1.7"/>
      <path d="M3.3 4.4 V11.6"/><path d="M10.7 6.9 C10.7 10 4.5 9 3.6 11.6"/>
    </g>
  </svg>
  <div class="abs" style="left:32px;top:0;font:12px/22px 'Liberation Sans',sans-serif;color:#f8f8f2;-webkit-text-stroke:0.2px currentColor">master*</div>
  <svg class="abs" style="left:89px;top:3px" width="16" height="16" viewBox="0 0 16 16">
    <g fill="none" stroke="#f8f8f2" stroke-width="1.3">
      <path d="M13.3 7.5 A5.3 5.3 0 0 0 3.4 5.2"/><path d="M2.7 8.5 A5.3 5.3 0 0 0 12.6 10.8"/>
    </g>
    <path d="M1.6 3 L5.4 3.2 L3 6.6 Z M14.4 13 L10.6 12.8 L13 9.4 Z" fill="#f8f8f2"/>
  </svg>
</div>
</body></html>
